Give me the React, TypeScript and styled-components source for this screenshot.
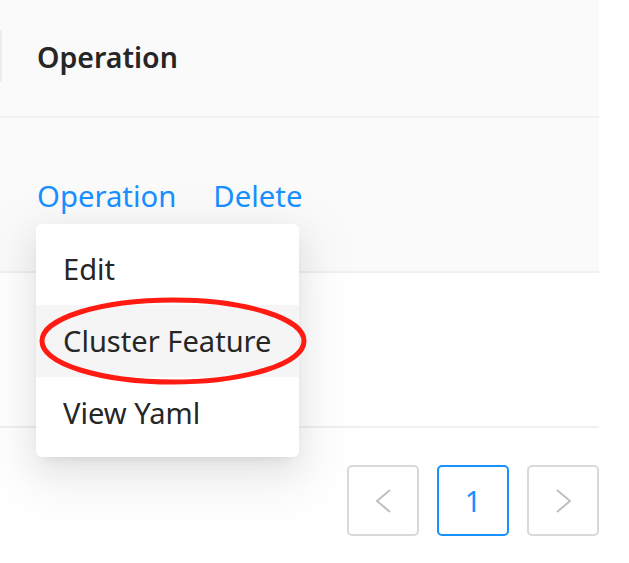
import React from "react";
import styled, { createGlobalStyle } from "styled-components";

const Global = createGlobalStyle`
  html, body { margin: 0; padding: 0; background: #ffffff; }
  body { font-family: "Noto Sans", "Open Sans", "Liberation Sans", sans-serif; }
`;

const Page = styled.div`
  position: relative;
  width: 629px;
  height: 563px;
  overflow: hidden;
  background: #fff;
`;

const Table = styled.div`
  width: 599px;
  display: flex;
  flex-direction: column;
`;

const HeaderRow = styled.div`
  position: relative;
  height: 116px;
  background: #fafafa;
  border-bottom: 2px solid #f0f0f0;
  display: flex;
  align-items: center;
  padding-left: 37px;
  box-sizing: content-box;
  &::before {
    content: "";
    position: absolute;
    left: 0;
    top: 30px;
    width: 2px;
    height: 52px;
    background: #ececec;
  }
`;

const HeaderText = styled.span`
  font-size: 28.5px;
  font-weight: 600;
  color: #262626;
  margin-top: -2px;
`;

const BodyRow = styled.div<{ $hover?: boolean }>`
  height: 153px;
  background: ${(p) => (p.$hover ? "#fafafa" : "#ffffff")};
  border-bottom: 2px solid #f0f0f0;
  display: flex;
  align-items: center;
  padding-left: 37px;
  gap: 37px;
`;

const Link = styled.a`
  font-size: 29.3px;
  color: #1890ff;
  text-decoration: none;
  margin-top: 3px;
`;

const Pager = styled.div`
  display: flex;
  justify-content: flex-end;
  gap: 18px;
  margin-top: 37px;
`;

const PageBtn = styled.div<{ $active?: boolean }>`
  width: 68px;
  height: 67px;
  border: 2px solid ${(p) => (p.$active ? "#1890ff" : "#d9d9d9")};
  border-radius: 5px;
  display: flex;
  align-items: center;
  justify-content: center;
  color: ${(p) => (p.$active ? "#1890ff" : "#bfbfbf")};
  font-size: 29px;
  background: #fff;
`;

const Menu = styled.div`
  position: absolute;
  left: 36px;
  top: 224px;
  width: 263px;
  padding: 9px 0 8px;
  background: #fff;
  border-radius: 6px;
  box-shadow: 0 6px 12px -8px rgba(0, 0, 0, 0.12),
    0 12px 32px 0 rgba(0, 0, 0, 0.08), 0 18px 56px 16px rgba(0, 0, 0, 0.05);
  display: flex;
  flex-direction: column;
`;

const MenuItem = styled.div<{ $active?: boolean }>`
  height: 72px;
  display: flex;
  align-items: center;
  padding-left: 27px;
  font-size: 29.1px;
  color: #262626;
  background: ${(p) => (p.$active ? "#f5f5f5" : "transparent")};
`;

const Annotation = styled.svg`
  position: absolute;
  left: 36px;
  top: 294px;
  overflow: visible;
`;

const Chevron = ({ dir }: { dir: "left" | "right" }) => (
  <svg width="17" height="26" viewBox="0 0 17 26">
    <path
      d={dir === "left" ? "M15 2 L2 13 L15 24" : "M2 2 L15 13 L2 24"}
      fill="none"
      stroke="#bfbfbf"
      strokeWidth="2"
    />
  </svg>
);

export default function App() {
  return (
    <Page>
      <Global />
      <Table>
        <HeaderRow>
          <HeaderText>Operation</HeaderText>
        </HeaderRow>
        <BodyRow $hover>
          <Link>Operation</Link>
          <Link>Delete</Link>
        </BodyRow>
        <BodyRow />
        <Pager>
          <PageBtn>
            <Chevron dir="left" />
          </PageBtn>
          <PageBtn $active>1</PageBtn>
          <PageBtn>
            <Chevron dir="right" />
          </PageBtn>
        </Pager>
      </Table>
      <Menu>
        <MenuItem>Edit</MenuItem>
        <MenuItem $active>Cluster Feature</MenuItem>
        <MenuItem>View Yaml</MenuItem>
      </Menu>
      <Annotation width="270" height="94" viewBox="0 0 270 94">
        <ellipse cx="137" cy="47" rx="131" ry="41" fill="none" stroke="#ff1a12" strokeWidth="5" />
      </Annotation>
    </Page>
  );
}
